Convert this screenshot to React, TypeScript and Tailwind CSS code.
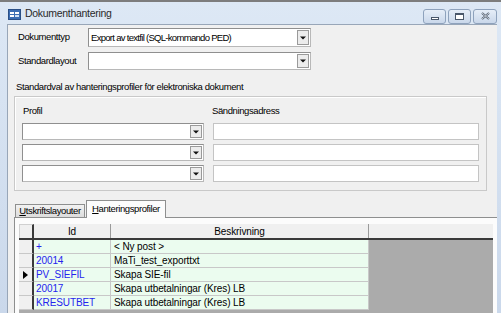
import React from "react";

const F = { fontFamily: '"Liberation Sans", Arial, sans-serif' };

function Combo({ w, h, text }: { w: number; h: number; text?: string }) {
  return (
    <div
      className="relative bg-white border border-[#b8b8b8] border-t-[#8f8f8f] border-l-[#8f8f8f] flex items-center"
      style={{ width: w, height: h }}
    >
      <span className="pl-[2px] text-[9.5px] tracking-[-0.7px] text-black leading-none whitespace-nowrap">{text}</span>
      <div className="absolute right-[1px] top-[1px] bottom-[1px] w-[12px] bg-[#ececec] border border-[#9a9a9a] flex items-center justify-center">
        <svg width="6" height="4" viewBox="0 0 6 4">
          <path d="M0 0.5H6L3 3.5Z" fill="#111" />
        </svg>
      </div>
    </div>
  );
}

function TextBox({ w }: { w: number }) {
  return <div className="bg-white border border-[#c4c4c4] h-[17px]" style={{ width: w }} />;
}

const rows = [
  { id: "+", d: "< Ny post >" },
  { id: "20014", d: "MaTi_test_exporttxt" },
  { id: "PV_SIEFIL", d: "Skapa SIE-fil", cur: true },
  { id: "20017", d: "Skapa utbetalningar (Kres) LB" },
  { id: "KRESUTBET", d: "Skapa utbetalningar (Kres) LB" },
];

export default function App() {
  return (
    <div
      className="w-[501px] h-[313px] overflow-hidden border-t-2 border-[#7d7d7d] bg-gradient-to-b from-[#dde8f5] to-[#cad8eb] flex flex-col"
      style={F}
    >
      {/* Title bar */}
      <div className="h-[22px] flex items-center pl-[8px] pr-[4px] shrink-0">
        <svg width="13" height="11" viewBox="0 0 13 11" className="mt-[2px]">
          <rect x="0.5" y="0.5" width="12" height="10" fill="#3b6db3" stroke="#2a4f86" />
          <rect x="2" y="3" width="4" height="2" fill="#fff" />
          <rect x="7" y="3" width="4" height="2" fill="#fff" />
          <rect x="2" y="6" width="4" height="2" fill="#fff" />
          <rect x="7" y="6" width="4" height="2" fill="#cfe0f5" />
        </svg>
        <span className="ml-[4px] mt-[2px] text-[10.5px] tracking-[-0.3px] text-[#2a2a2a]">Dokumenthantering</span>
        <div className="ml-auto flex gap-[2px] mt-[6px]">
          <div className="w-[23px] h-[15px] rounded-[3px] border border-[#8ea2bc] bg-gradient-to-b from-[#e6eef8] to-[#c9d7ea] flex items-center justify-center">
            <div className="w-[8px] h-[3px] border border-[#49576a] bg-white mt-[4px]" />
          </div>
          <div className="w-[23px] h-[15px] rounded-[3px] border border-[#8ea2bc] bg-gradient-to-b from-[#e6eef8] to-[#c9d7ea] flex items-center justify-center">
            <div className="w-[9px] h-[7px] border border-[#49576a] border-t-2 bg-white" />
          </div>
          <div className="w-[24px] h-[15px] rounded-[3px] border border-[#8ea2bc] bg-gradient-to-b from-[#e6eef8] to-[#c9d7ea] flex items-center justify-center">
            <svg width="9" height="8" viewBox="0 0 9 8">
              <path d="M1 1L8 7M8 1L1 7" stroke="#49576a" strokeWidth="2" />
              <path d="M1 1L8 7M8 1L1 7" stroke="#fff" strokeWidth="0.7" />
            </svg>
          </div>
        </div>
      </div>

      {/* Client area frame */}
      <div className="flex-1 flex pl-[7px] pr-[4px] min-h-0">
        <div className="flex-1 bg-[#f0f0f0] border-l border-t border-[#98a6b8] flex flex-col min-h-0 overflow-hidden text-[9.5px] tracking-[-0.4px] text-black">
          {/* Row 1 */}
          <div className="flex items-center pl-[10px] pt-[3px]">
            <span className="w-[70px]">Dokumenttyp</span>
            <Combo w={223} h={19} text="Export av textfil (SQL-kommando PED)" />
          </div>
          {/* Row 2 */}
          <div className="flex items-center pl-[10px] mt-[5px]">
            <span className="w-[70px]">Standardlayout</span>
            <Combo w={223} h={18} />
          </div>
          <div className="pl-[8px] mt-[11px] leading-[12px]">
            Standardval av hanteringsprofiler för elektroniska dokument
          </div>
          {/* Group box */}
          <div className="ml-[6px] mt-[3px] w-[473px] h-[95px] border border-[#c9c9c9] shadow-[inset_1px_1px_0_#ffffff] flex flex-col pl-[7px]">
            <div className="flex mt-[8px] leading-[12px]">
              <span className="w-[190px] pl-[1px]">Profil</span>
              <span>Sändningsadress</span>
            </div>
            <div className="flex flex-col mt-[6px] gap-[4px]">
              {[0, 1, 2].map((i) => (
                <div key={i} className="flex gap-[9px]">
                  <Combo w={182} h={17} />
                  <TextBox w={266} />
                </div>
              ))}
            </div>
          </div>
          {/* Tabs */}
          <div className="flex items-end pl-[7px] mt-[8px] h-[18px]">
            <div className="h-[13px] w-[70px] border border-[#8e8f8f] border-b-0 bg-gradient-to-b from-[#f2f2f2] to-[#dcdcdc] flex items-center justify-center">
              <span>
                <span className="underline">U</span>tskriftslayouter
              </span>
            </div>
            <div className="h-[18px] w-[80px] ml-[1px] border border-[#8e8f8f] border-b-0 bg-[#fcfcfc] flex items-center justify-center relative z-10 -mb-[1px]">
              <span>
                <span className="underline">H</span>anteringsprofiler
              </span>
            </div>
          </div>
          {/* Tab panel */}
          <div className="ml-[6px] flex-1 border-l border-t border-[#8e8f8f] bg-[#fcfcfc] pt-[6px] pl-[4px] min-h-0">
            <div className="h-full w-[474px] bg-[#ababab] text-[10px] tracking-[-0.1px]">
              {/* Header */}
              <div className="flex h-[16px] border-b-2 border-[#3a3a3a] bg-[#f0f0f0]">
                <div className="w-[15px] border-r-2 border-[#3a3a3a] border-t border-l border-t-[#d0d0d0] border-l-[#d0d0d0]" />
                <div className="w-[77px] border-r border-[#9a9a9a] flex items-center justify-center">Id</div>
                <div className="w-[258px] border-r border-[#9a9a9a] flex items-center justify-center">Beskrivning</div>
              </div>
              {rows.map((r, i) => (
                <div key={i} className="flex h-[14px]">
                  <div className="w-[15px] bg-[#f0f0f0] border-r-2 border-[#3a3a3a] border-b border-b-[#c8c8c8] flex items-center justify-center">
                    {r.cur && (
                      <svg width="5" height="8" viewBox="0 0 5 8">
                        <path d="M0 0L5 4L0 8Z" fill="#000" />
                      </svg>
                    )}
                  </div>
                  <div className="w-[77px] bg-[#ebfcef] border-r border-b border-[#c8c8c8] pl-[2px] flex items-center text-[#2424ee] whitespace-nowrap">
                    {r.id}
                  </div>
                  <div className="w-[258px] bg-[#ebfcef] border-r border-b border-[#c8c8c8] pl-[3px] flex items-center whitespace-nowrap">
                    {r.d}
                  </div>
                </div>
              ))}
            </div>
          </div>
        </div>
      </div>
    </div>
  );
}
